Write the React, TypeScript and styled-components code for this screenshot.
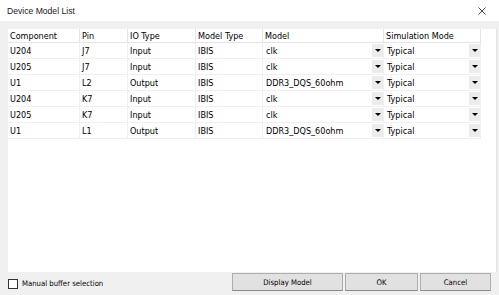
import styled, { createGlobalStyle } from "styled-components";

const GlobalStyle = createGlobalStyle`
  html, body {
    margin: 0;
    padding: 0;
    background: #f0f0f0;
  }
  * {
    box-sizing: border-box;
  }
`;

const uiFont = `"DejaVu Sans Condensed", "Liberation Sans", Arial, sans-serif`;

const Window = styled.div`
  width: 499px;
  height: 295px;
  display: flex;
  flex-direction: column;
  background: #f0f0f0;
  font-family: ${uiFont};
  color: #000;
  overflow: hidden;
`;

const TitleBar = styled.div`
  height: 21px;
  flex: none;
  display: flex;
  align-items: center;
  justify-content: space-between;
  background: #fff;
  padding: 0 13px 0 7px;
`;

const Title = styled.span`
  font-family: "Liberation Sans", Arial, sans-serif;
  font-size: 8.6px;
  color: #1a1a1a;
`;

const CloseIcon = styled.svg`
  width: 8px;
  height: 8px;
`;

const Body = styled.div`
  flex: 1;
  display: flex;
  flex-direction: column;
  padding: 8px 2px 0 8px;
`;

const Panel = styled.div`
  flex: 1;
  background: #fff;
  border-right: 1px solid #e3e3e3;
`;

const Grid = styled.div`
  display: grid;
  grid-template-columns: 72px 48px 68px 67px 121px 97px;
  width: 473px;
`;

const HeaderCell = styled.div`
  height: 14px;
  display: flex;
  align-items: center;
  padding-left: 2px;
  font-size: 9px;
  border-right: 1px solid #e5e5e5;
  border-bottom: 1px solid #e5e5e5;
  white-space: nowrap;
`;

const Cell = styled.div`
  height: 16px;
  display: flex;
  align-items: center;
  padding-left: 2px;
  font-size: 9px;
  border-right: 1px solid #f0f0f0;
  border-bottom: 1px solid #f0f0f0;
  white-space: nowrap;
`;

const ComboCell = styled(Cell)`
  justify-content: space-between;
  padding: 1px 0 1px 3px;
`;

const DropButton = styled.span`
  width: 11px;
  height: 100%;
  display: flex;
  align-items: center;
  justify-content: center;
  background: #ececec;
`;

const Arrow = styled.span`
  width: 0;
  height: 0;
  border-left: 3px solid transparent;
  border-right: 3px solid transparent;
  border-top: 3px solid #000;
`;

const Footer = styled.div`
  height: 23px;
  flex: none;
  display: flex;
  align-items: center;
  padding: 0 6px 0 0;
`;

const CheckLabel = styled.label`
  display: flex;
  align-items: center;
  gap: 4px;
  font-size: 7.7px;
  flex: 1;
`;

const CheckBox = styled.span`
  width: 10px;
  height: 10px;
  border: 1px solid #333;
  background: #fff;
`;

const Buttons = styled.div`
  display: flex;
  gap: 2px;
  align-self: flex-start;
  margin-top: 1px;
`;

const Button = styled.button<{ $w: number }>`
  width: ${(p) => p.$w}px;
  height: 18px;
  padding: 0;
  background: #e1e1e1;
  border: 1px solid #adadad;
  border-bottom-color: #8a8a8a;
  font-family: ${uiFont};
  font-size: 7.7px;
  color: #000;
`;

const rows = [
  { comp: "U204", pin: "J7", io: "Input", type: "IBIS", model: "clk" },
  { comp: "U205", pin: "J7", io: "Input", type: "IBIS", model: "clk" },
  { comp: "U1", pin: "L2", io: "Output", type: "IBIS", model: "DDR3_DQS_60ohm" },
  { comp: "U204", pin: "K7", io: "Input", type: "IBIS", model: "clk" },
  { comp: "U205", pin: "K7", io: "Input", type: "IBIS", model: "clk" },
  { comp: "U1", pin: "L1", io: "Output", type: "IBIS", model: "DDR3_DQS_60ohm" },
];

const headers = ["Component", "Pin", "IO Type", "Model Type", "Model", "Simulation Mode"];

function Combo({ value }: { value: string }) {
  return (
    <ComboCell>
      {value}
      <DropButton>
        <Arrow />
      </DropButton>
    </ComboCell>
  );
}

export default function App() {
  return (
    <Window>
      <GlobalStyle />
      <TitleBar>
        <Title>Device Model List</Title>
        <CloseIcon viewBox="0 0 8 8">
          <path d="M0.5 0.5 L7.5 7.5 M7.5 0.5 L0.5 7.5" stroke="#333" strokeWidth="0.9" />
        </CloseIcon>
      </TitleBar>
      <Body>
        <Panel>
          <Grid>
            {headers.map((h) => (
              <HeaderCell key={h}>{h}</HeaderCell>
            ))}
            {rows.map((r, i) => (
              <div key={i} style={{ display: "contents" }}>
                <Cell>{r.comp}</Cell>
                <Cell>{r.pin}</Cell>
                <Cell>{r.io}</Cell>
                <Cell>{r.type}</Cell>
                <Combo value={r.model} />
                <Combo value="Typical" />
              </div>
            ))}
          </Grid>
        </Panel>
        <Footer>
          <CheckLabel>
            <CheckBox />
            Manual buffer selection
          </CheckLabel>
          <Buttons>
            <Button $w={111}>Display Model</Button>
            <Button $w={73}>OK</Button>
            <Button $w={71}>Cancel</Button>
          </Buttons>
        </Footer>
      </Body>
    </Window>
  );
}
